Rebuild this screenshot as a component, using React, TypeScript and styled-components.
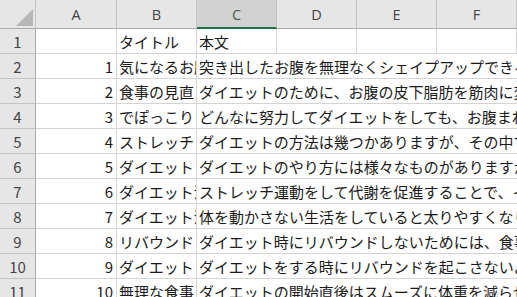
import React from 'react';
import styled, { createGlobalStyle } from 'styled-components';

const GlobalStyle = createGlobalStyle`
  html, body {
    margin: 0;
    padding: 0;
    background: #ffffff;
    overflow: hidden;
  }
  body {
    font-family: "Noto Sans CJK JP", "Noto Sans", sans-serif;
  }
`;

interface RowData {
  no: number;
  title: string;
  body: string;
}

const rows: RowData[] = [
  { no: 1, title: '気になるお腹', body: '突き出したお腹を無理なくシェイプアップできる方法' },
  { no: 2, title: '食事の見直し', body: 'ダイエットのために、お腹の皮下脂肪を筋肉に変える' },
  { no: 3, title: 'でぽっこり', body: 'どんなに努力してダイエットをしても、お腹まわりが' },
  { no: 4, title: 'ストレッチ', body: 'ダイエットの方法は幾つかありますが、その中でも' },
  { no: 5, title: 'ダイエット', body: 'ダイエットのやり方には様々なものがありますが、' },
  { no: 6, title: 'ダイエット法', body: 'ストレッチ運動をして代謝を促進することで、イ' },
  { no: 7, title: 'ダイエット法', body: '体を動かさない生活をしていると太りやすくなり' },
  { no: 8, title: 'リバウンド', body: 'ダイエット時にリバウンドしないためには、食事' },
  { no: 9, title: 'ダイエット', body: 'ダイエットをする時にリバウンドを起こさないよう' },
  { no: 10, title: '無理な食事', body: 'ダイエットの開始直後はスムーズに体重を減らせ' },
];

const columns = ['A', 'B', 'C', 'D', 'E', 'F'];
const selectedColumn = 'C';

function App() {
  return (
    <>
      <GlobalStyle />
      <Sheet>
        <HeaderRow>
          <Corner>
            <CornerMark />
          </Corner>
          {columns.map((c) => (
            <ColumnHeader key={c} selected={c === selectedColumn}>
              {c}
            </ColumnHeader>
          ))}
        </HeaderRow>

        <DataRow>
          <RowHeader>1</RowHeader>
          <Cell />
          <Cell>タイトル</Cell>
          <Cell>本文</Cell>
          <Cell />
          <Cell />
          <Cell />
        </DataRow>

        {rows.map((r, i) => (
          <DataRow key={r.no}>
            <RowHeader>{i + 2}</RowHeader>
            <NumberCell>{r.no}</NumberCell>
            <Cell>{r.title}</Cell>
            <OverflowCell>{r.body}</OverflowCell>
          </DataRow>
        ))}
      </Sheet>
    </>
  );
}

const GRID = '36px 81px 80px 80px 80px 80px 80px';

const Sheet = styled.div`
  display: flex;
  flex-direction: column;
  width: 560px;
`;

const HeaderRow = styled.div`
  display: grid;
  grid-template-columns: ${GRID};
  height: 29px;
  background: #e6e6e6;
`;

const Corner = styled.div`
  position: relative;
  box-sizing: border-box;
  border-right: 1px solid #c4c4c4;
  border-bottom: 1px solid #ababab;
`;

const CornerMark = styled.div`
  position: absolute;
  right: 2px;
  bottom: 2px;
  width: 0;
  height: 0;
  border-style: solid;
  border-width: 0 0 17px 17px;
  border-color: transparent transparent #b7b7b7 transparent;
`;

const ColumnHeader = styled.div<{ selected?: boolean }>`
  display: flex;
  align-items: center;
  justify-content: center;
  box-sizing: border-box;
  border-right: 1px solid #c4c4c4;
  border-bottom: ${({ selected }) =>
    selected ? '2px solid #217346' : '1px solid #ababab'};
  padding-top: ${({ selected }) => (selected ? '1px' : '0')};
  background: ${({ selected }) => (selected ? '#d2d2d2' : '#e6e6e6')};
  color: ${({ selected }) => (selected ? '#3f5e4a' : '#444444')};
  font-family: "Open Sans", "Noto Sans", sans-serif;
  font-size: 14.5px;
`;

const DataRow = styled.div`
  display: grid;
  grid-template-columns: ${GRID};
  height: 25px;
`;

const RowHeader = styled.div`
  display: flex;
  align-items: center;
  justify-content: center;
  box-sizing: border-box;
  background: #e6e6e6;
  border-right: 1px solid #ababab;
  border-bottom: 1px solid #c4c4c4;
  color: #444444;
  font-size: 15px;
`;

const Cell = styled.div`
  display: flex;
  align-items: center;
  box-sizing: border-box;
  min-width: 0;
  overflow: hidden;
  white-space: nowrap;
  padding: 0 2px;
  border-right: 1px solid #d4d4d4;
  border-bottom: 1px solid #d4d4d4;
  color: #1a1a1a;
  font-size: 15px;
`;

const NumberCell = styled(Cell)`
  justify-content: flex-end;
  padding-right: 3px;
`;

const OverflowCell = styled(Cell)`
  grid-column: span 4;
  border-right: none;
`;

export default App;
